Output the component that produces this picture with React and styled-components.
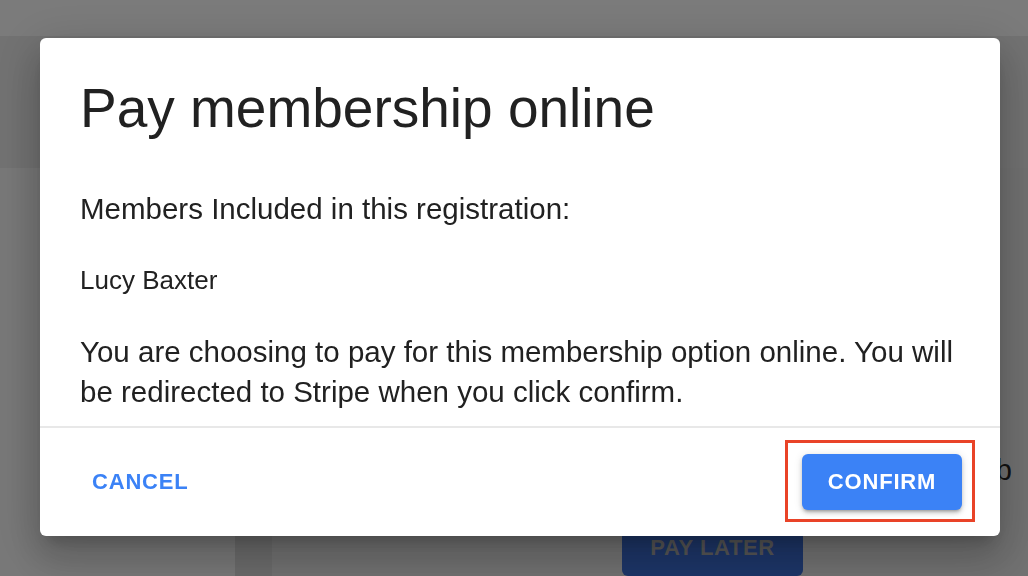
import React from "react";
import styled, { createGlobalStyle } from "styled-components";

const Global = createGlobalStyle`
  html, body { margin: 0; padding: 0; }
  body {
    width: 1028px;
    height: 576px;
    overflow: hidden;
    font-family: "Liberation Sans", Arial, Helvetica, sans-serif;
    background: #f2f2f2;
  }
  * { box-sizing: border-box; }
`;

/* ---------- underlying page ---------- */
const Page = styled.div`
  width: 1028px;
  height: 576px;
  display: flex;
  flex-direction: column;
  overflow: hidden;
`;

const TopBar = styled.header`
  height: 36px;
  background: #f6f6f6;
  flex: none;
`;

const HeaderBand = styled.section`
  height: 132px;
  background: #e4e4e4;
  flex: none;
`;

const Main = styled.main`
  flex: 1;
  display: flex;
  background: #f0f0f0;
`;

const LeftArea = styled.div`
  width: 235px;
  flex: none;
`;

const Strip = styled.div`
  width: 37px;
  flex: none;
  background: #d6d6d6;
`;

const Card = styled.div`
  flex: 1;
  background: #e2e2e2;
  padding: 282px 16px 0 0;
  display: flex;
  flex-direction: column;
`;

const CardText = styled.p`
  margin: 0;
  font-size: 29px;
  line-height: 40px;
  color: #222;
  text-align: right;
`;

const ButtonRow = styled.div`
  display: flex;
  padding-left: 350px;
  margin-top: 30px;
`;

const PayLater = styled.button`
  width: 181px;
  height: 56px;
  border: none;
  border-radius: 6px;
  background: #3a6bd0;
  color: #acacac;
  font-family: "Liberation Sans", Arial, sans-serif;
  font-weight: 700;
  font-size: 22px;
  letter-spacing: 0.6px;
`;

/* ---------- overlay + dialog ---------- */
const Backdrop = styled.div`
  position: fixed;
  inset: 0;
  background: rgba(0, 0, 0, 0.5);
  display: flex;
  align-items: flex-start;
  padding: 38px 28px 0 40px;
`;

const Dialog = styled.div`
  width: 960px;
  background: #fff;
  border-radius: 6px;
  box-shadow: 0px 11px 15px -7px rgba(0, 0, 0, 0.2),
    0px 24px 38px 3px rgba(0, 0, 0, 0.14), 0px 9px 46px 8px rgba(0, 0, 0, 0.12);
  display: flex;
  flex-direction: column;
  color: #212121;
`;

const Title = styled.h2`
  margin: 0;
  padding: 36px 40px 0;
  font-weight: 400;
  font-size: 55px;
  line-height: 68px;
  letter-spacing: 0;
`;

const Content = styled.div`
  padding: 47px 30px 14px 40px;
  border-bottom: 2px solid #e8e8e8;
`;

const Text = styled.p`
  margin: 0 0 ${(p) => p.$gap || 0}px;
  font-size: ${(p) => p.$size || 29.5}px;
  line-height: ${(p) => p.$lh || 40}px;
  letter-spacing: 0;
`;

const Footer = styled.div`
  height: 108px;
  display: flex;
  align-items: center;
  justify-content: space-between;
  padding: 0 38px;
`;

const TextButton = styled.button`
  border: none;
  background: transparent;
  padding: 14px;
  color: #3b82f6;
  font-family: "Liberation Sans", Arial, sans-serif;
  font-weight: 700;
  font-size: 22px;
  letter-spacing: 0.8px;
  cursor: pointer;
`;

const Highlight = styled.div`
  position: relative;
  &::after {
    content: "";
    position: absolute;
    top: -14px;
    left: -17px;
    right: -13px;
    bottom: -12px;
    border: 3px solid #e94328;
    pointer-events: none;
  }
`;

const PrimaryButton = styled.button`
  width: 160px;
  height: 56px;
  border: none;
  border-radius: 6px;
  background: #3b82f6;
  color: #fff;
  font-family: "Liberation Sans", Arial, sans-serif;
  font-weight: 700;
  font-size: 22px;
  letter-spacing: 0.8px;
  box-shadow: 0px 3px 3px -2px rgba(0, 0, 0, 0.25),
    0px 3px 4px 0px rgba(0, 0, 0, 0.16), 0px 1px 8px 0px rgba(0, 0, 0, 0.12);
  cursor: pointer;
`;

export default function App() {
  return (
    <>
      <Global />
      <Page>
        <TopBar />
        <HeaderBand />
        <Main>
          <LeftArea />
          <Strip />
          <Card>
            <CardText>Club</CardText>
            <ButtonRow>
              <PayLater>PAY LATER</PayLater>
            </ButtonRow>
          </Card>
        </Main>
      </Page>
      <Backdrop>
        <Dialog role="dialog">
          <Title>Pay membership online</Title>
          <Content>
            <Text $gap={33}>Members Included in this registration:</Text>
            <Text $gap={34} $size={26} $lh={36}>
              Lucy Baxter
            </Text>
            <Text>
              You are choosing to pay for this membership option online. You will
              be redirected to Stripe when you click confirm.
            </Text>
          </Content>
          <Footer>
            <TextButton>CANCEL</TextButton>
            <Highlight>
              <PrimaryButton>CONFIRM</PrimaryButton>
            </Highlight>
          </Footer>
        </Dialog>
      </Backdrop>
    </>
  );
}
